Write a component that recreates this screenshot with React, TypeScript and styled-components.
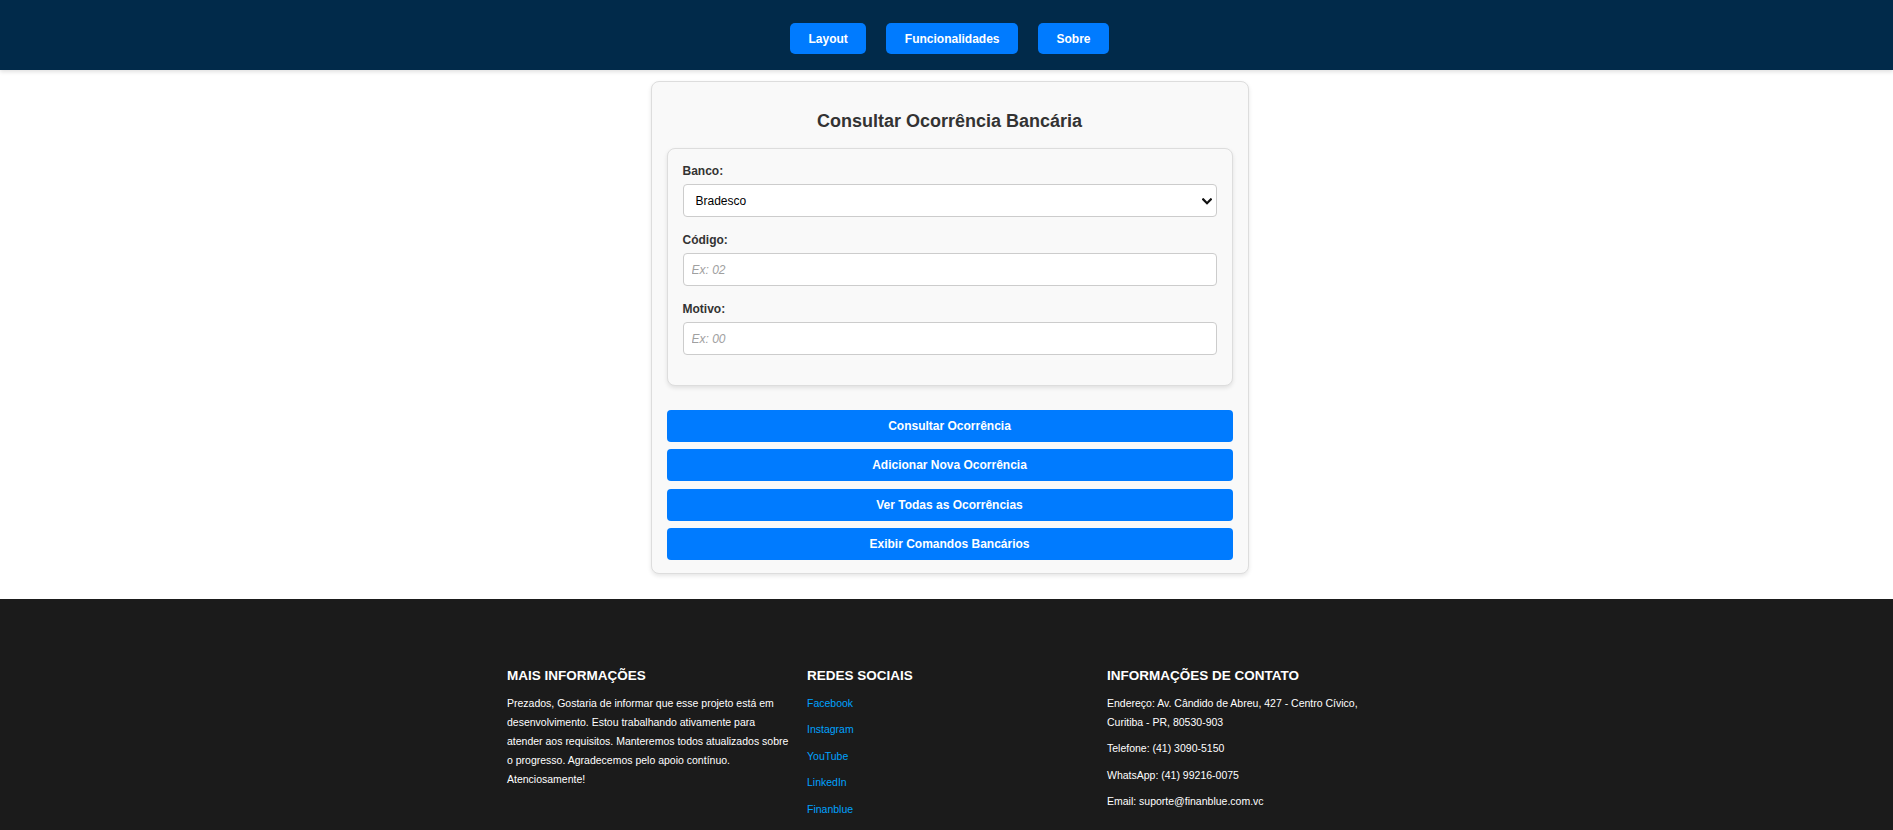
import React from 'react';
import styled, { createGlobalStyle } from 'styled-components';

const GlobalStyle = createGlobalStyle`
  *, *::before, *::after { box-sizing: border-box; }
  html, body {
    margin: 0;
    padding: 0;
    background: #ffffff;
    font-family: "Liberation Sans", Arial, sans-serif;
  }
`;

const FONT = `"Liberation Sans", Arial, sans-serif`;

const Header = styled.header`
  position: relative;
  z-index: 1;
  height: 70px;
  padding: 23px 0 0 6px;
  background: #012a4a;
  box-shadow: 0 2px 4px rgba(0, 0, 0, 0.12);
`;

const Nav = styled.nav`
  display: flex;
  justify-content: center;
  gap: 20px;
`;

const NavButton = styled.button`
  height: 31px;
  padding: 0 18.5px;
  border: none;
  border-radius: 5px;
  background: #007bff;
  color: #ffffff;
  font: bold 12px ${FONT};
  cursor: pointer;
`;

const Main = styled.main`
  display: flex;
  justify-content: center;
  padding: 11px 0 25px 6px;
`;

const Card = styled.section`
  width: 598px;
  padding: 15px 15px 13px;
  background: #f9f9f9;
  border: 1px solid #dddddd;
  border-radius: 8px;
  box-shadow: 0 2px 4px rgba(0, 0, 0, 0.1);
`;

const Title = styled.h2`
  margin: 14px 0 16px;
  font: bold 18px/21px ${FONT};
  color: #333333;
  text-align: center;
`;

const FormBox = styled.form`
  padding: 15px 15px 14px;
  background: #f9f9f9;
  border: 1px solid #dddddd;
  border-radius: 8px;
  box-shadow: 0 2px 4px rgba(0, 0, 0, 0.1);
`;

const FormGroup = styled.div`
  margin-bottom: 16px;
`;

const Label = styled.label`
  display: block;
  margin-bottom: 6px;
  font: bold 12px/14px ${FONT};
  color: #333333;
`;

const fieldBase = `
  display: block;
  width: 100%;
  height: 33px;
  border: 1px solid #cccccc;
  border-radius: 4px;
  background: #ffffff;
  color: #000000;
  font: 12px ${FONT};
  outline: none;
`;

const TextInput = styled.input`
  ${fieldBase}
  padding: 0 8px;

  &::placeholder {
    color: #a0a0a0;
    font-style: italic;
  }
`;

const SelectWrap = styled.div`
  position: relative;
`;

const Select = styled.select`
  ${fieldBase}
  appearance: none;
  -webkit-appearance: none;
  padding: 0 24px 0 12px;
`;

const Chevron = styled.svg`
  position: absolute;
  right: 5px;
  top: 14px;
  width: 10px;
  height: 7px;
  pointer-events: none;
`;

const ButtonStack = styled.div`
  display: flex;
  flex-direction: column;
  gap: 7.33px;
  margin-top: 24px;
`;

const ActionButton = styled.button`
  height: 32px;
  width: 100%;
  border: none;
  border-radius: 4px;
  background: #007bff;
  color: #ffffff;
  font: bold 12px ${FONT};
  cursor: pointer;
`;

const Footer = styled.footer`
  background: #1b1b1b;
  color: #ffffff;
  padding: 69px 0 40px 6px;
`;

const FooterGrid = styled.div`
  display: grid;
  grid-template-columns: repeat(3, 285px);
  column-gap: 15px;
  justify-content: center;
`;

const FooterColumn = styled.div``;

const FooterHeading = styled.h3`
  margin: 0 0 10px;
  font: bold 13.5px/16px ${FONT};
  color: #ffffff;
`;

const FooterText = styled.p`
  margin: 0 0 7.5px;
  font: 10.5px/19px ${FONT};
  color: #ffffff;
`;

const LinkList = styled.ul`
  list-style: none;
  margin: 0;
  padding: 0;
`;

const LinkItem = styled.li`
  margin: 0 0 7.5px;
  font: 10.5px/19px ${FONT};
`;

const FooterLink = styled.a`
  color: #00a2ff;
  text-decoration: none;
`;

const navItems = ['Layout', 'Funcionalidades', 'Sobre'];
const actions = [
  'Consultar Ocorrência',
  'Adicionar Nova Ocorrência',
  'Ver Todas as Ocorrências',
  'Exibir Comandos Bancários',
];
const socials = ['Facebook', 'Instagram', 'YouTube', 'LinkedIn', 'Finanblue'];

export default function App() {
  return (
    <>
      <GlobalStyle />
      <Header>
        <Nav>
          {navItems.map((n) => (
            <NavButton key={n} type="button">
              {n}
            </NavButton>
          ))}
        </Nav>
      </Header>

      <Main>
        <Card>
          <Title>Consultar Ocorrência Bancária</Title>
          <FormBox onSubmit={(e) => e.preventDefault()}>
            <FormGroup>
              <Label htmlFor="banco">Banco:</Label>
              <SelectWrap>
                <Select id="banco" defaultValue="bradesco">
                  <option value="bradesco">Bradesco</option>
                  <option value="itau">Itaú</option>
                  <option value="santander">Santander</option>
                  <option value="bb">Banco do Brasil</option>
                  <option value="caixa">Caixa Econômica</option>
                </Select>
                <Chevron viewBox="0 0 10 7" aria-hidden="true">
                  <path
                    d="M1.2 1.4 L5 5.2 L8.8 1.4"
                    fill="none"
                    stroke="#111"
                    strokeWidth="2.2"
                    strokeLinecap="square"
                  />
                </Chevron>
              </SelectWrap>
            </FormGroup>
            <FormGroup>
              <Label htmlFor="codigo">Código:</Label>
              <TextInput id="codigo" placeholder="Ex: 02" />
            </FormGroup>
            <FormGroup>
              <Label htmlFor="motivo">Motivo:</Label>
              <TextInput id="motivo" placeholder="Ex: 00" />
            </FormGroup>
          </FormBox>
          <ButtonStack>
            {actions.map((a) => (
              <ActionButton key={a} type="button">
                {a}
              </ActionButton>
            ))}
          </ButtonStack>
        </Card>
      </Main>

      <Footer>
        <FooterGrid>
          <FooterColumn>
            <FooterHeading>MAIS INFORMAÇÕES</FooterHeading>
            <FooterText>
              Prezados, Gostaria de informar que esse projeto está em desenvolvimento. Estou
              trabalhando ativamente para atender aos requisitos. Manteremos todos atualizados
              sobre o progresso. Agradecemos pelo apoio contínuo. Atenciosamente!
            </FooterText>
          </FooterColumn>
          <FooterColumn>
            <FooterHeading>REDES SOCIAIS</FooterHeading>
            <LinkList>
              {socials.map((s) => (
                <LinkItem key={s}>
                  <FooterLink href="#">{s}</FooterLink>
                </LinkItem>
              ))}
            </LinkList>
          </FooterColumn>
          <FooterColumn>
            <FooterHeading>INFORMAÇÕES DE CONTATO</FooterHeading>
            <FooterText>Endereço: Av. Cândido de Abreu, 427 - Centro Cívico, Curitiba - PR, 80530-903</FooterText>
            <FooterText>Telefone: (41) 3090-5150</FooterText>
            <FooterText>WhatsApp: (41) 99216-0075</FooterText>
            <FooterText>Email: suporte@finanblue.com.vc</FooterText>
          </FooterColumn>
        </FooterGrid>
      </Footer>
    </>
  );
}
